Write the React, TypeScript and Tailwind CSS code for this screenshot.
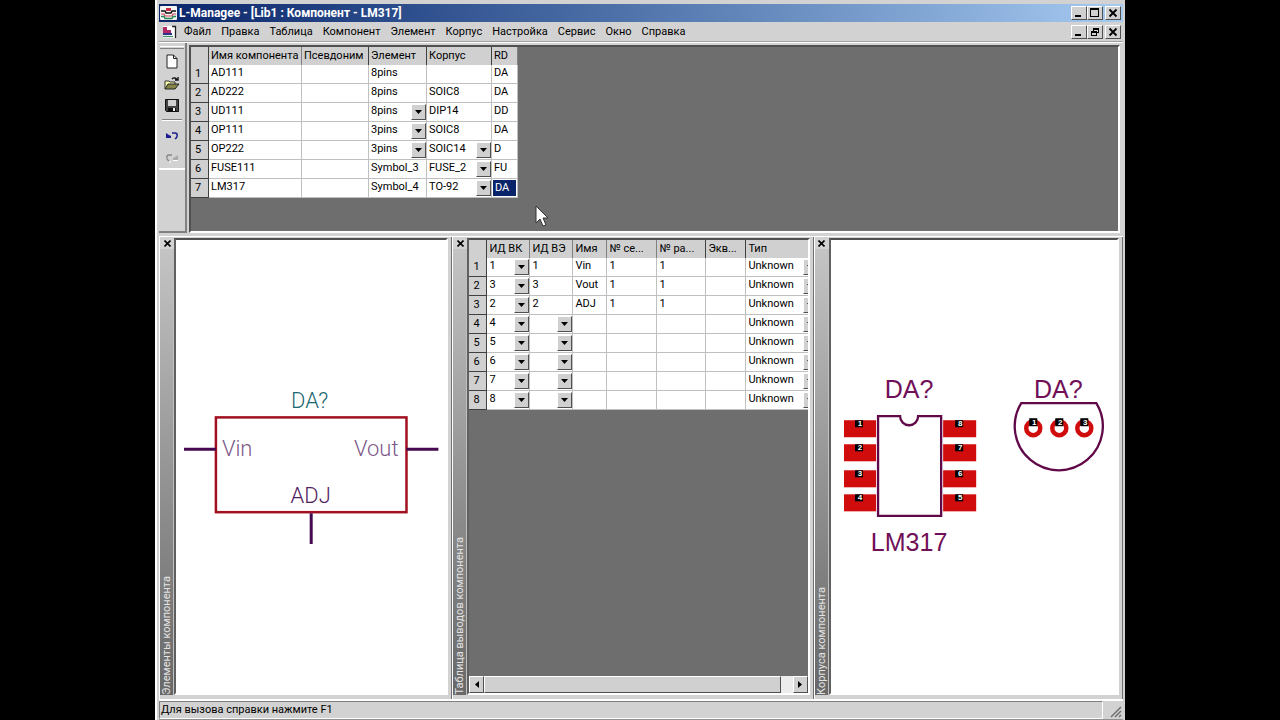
import React from "react";
import clsx from "clsx";

interface Part {
  name: string;
  alias: string;
  symbol: string;
  footprint: string;
  rd: string;
  pickSymbol?: boolean;
  pickFootprint?: boolean;
}

interface Pin {
  pad: string;
  pin: string;
  name: string;
  section: string;
  equal: string;
}

const menuItems = ["Файл", "Правка", "Таблица", "Компонент", "Элемент", "Корпус", "Настройка", "Сервис", "Окно", "Справка"];

const parts: Part[] = [
  { name: "AD111", alias: "", symbol: "8pins", footprint: "", rd: "DA" },
  { name: "AD222", alias: "", symbol: "8pins", footprint: "SOIC8", rd: "DA" },
  { name: "UD111", alias: "", symbol: "8pins", footprint: "DIP14", rd: "DD", pickSymbol: true },
  { name: "OP111", alias: "", symbol: "3pins", footprint: "SOIC8", rd: "DA", pickSymbol: true },
  { name: "OP222", alias: "", symbol: "3pins", footprint: "SOIC14", rd: "D", pickSymbol: true, pickFootprint: true },
  { name: "FUSE111", alias: "", symbol: "Symbol_3", footprint: "FUSE_2", rd: "FU", pickFootprint: true },
  { name: "LM317", alias: "", symbol: "Symbol_4", footprint: "TO-92", rd: "DA", pickFootprint: true },
];

const pins: Pin[] = [
  { pad: "1", pin: "1", name: "Vin", section: "1", equal: "1" },
  { pad: "3", pin: "3", name: "Vout", section: "1", equal: "1" },
  { pad: "2", pin: "2", name: "ADJ", section: "1", equal: "1" },
  { pad: "4", pin: "", name: "", section: "", equal: "" },
  { pad: "5", pin: "", name: "", section: "", equal: "" },
  { pad: "6", pin: "", name: "", section: "", equal: "" },
  { pad: "7", pin: "", name: "", section: "", equal: "" },
  { pad: "8", pin: "", name: "", section: "", equal: "" },
];

const raised = "bg-[#d0d0d0] border border-t-white border-l-white border-r-[#505050] border-b-[#505050]";

/* Drop-down that fills a grid cell */
function CellSelect({ label, value }: { label: string; value: string }) {
  return (
    <div className="relative h-full">
      <select
        aria-label={label}
        defaultValue={value}
        className="block h-full w-full appearance-none bg-transparent pl-[2px] pr-4 pb-[3px] leading-[15px] outline-none"
      >
        <option value={value}>{value}</option>
      </select>
      <span className={clsx("pointer-events-none absolute right-0 top-px flex h-4 w-[15px] items-center justify-center", raised)}>
        <svg width="7" height="4" viewBox="0 0 7 4">
          <path d="M0 0h7L3.500 4z" fill="#000" />
        </svg>
      </span>
    </div>
  );
}

function HeadCell({ children, dark }: { children?: React.ReactNode; dark?: boolean }) {
  return (
    <th
      scope="col"
      className={clsx(
        "h-[18px] truncate border-r bg-[#d0d0d0] p-0 pl-[2px] pb-px text-left font-normal leading-4",
        dark ? "border-[#404040]" : "border-[#808080]"
      )}
    >
      {children}
    </th>
  );
}

function RowHead({ children }: { children: React.ReactNode }) {
  return (
    <th
      scope="row"
      className="h-[19px] border-b border-r border-[#404040] bg-[#d0d0d0] p-0 pl-1 text-left font-normal leading-4"
    >
      {children}
    </th>
  );
}

function Cell({ children, flush }: { children?: React.ReactNode; flush?: boolean }) {
  return (
    <td
      className={clsx(
        "h-[19px] border-b border-r border-[#c0c0c0] bg-white p-0 align-top leading-[15px] whitespace-nowrap",
        !flush && "pl-[2px]"
      )}
    >
      {children}
    </td>
  );
}

function PartsTable() {
  return (
    <table className="w-[327px] table-fixed border-separate border-spacing-0">
      <colgroup>
        <col className="w-[18px]" />
        <col className="w-[93px]" />
        <col className="w-[67px]" />
        <col className="w-[58px]" />
        <col className="w-[65px]" />
        <col className="w-[26px]" />
      </colgroup>
      <thead>
        <tr>
          <HeadCell dark />
          <HeadCell>Имя компонента</HeadCell>
          <HeadCell dark>Псевдоним</HeadCell>
          <HeadCell dark>Элемент</HeadCell>
          <HeadCell dark>Корпус</HeadCell>
          <HeadCell>RD</HeadCell>
        </tr>
      </thead>
      <tbody>
        {parts.map((part, i) => (
          <tr key={part.name}>
            <RowHead>{i + 1}</RowHead>
            <Cell>{part.name}</Cell>
            <Cell>{part.alias}</Cell>
            <Cell flush={part.pickSymbol}>
              {part.pickSymbol ? <CellSelect label={`Элемент ${part.name}`} value={part.symbol} /> : part.symbol}
            </Cell>
            <Cell flush={part.pickFootprint}>
              {part.pickFootprint ? <CellSelect label={`Корпус ${part.name}`} value={part.footprint} /> : part.footprint}
            </Cell>
            <Cell flush={i === parts.length - 1}>
              {i === parts.length - 1 ? (
                <span className="mx-px mt-px block h-4 bg-[#0a246a] pl-[2px] text-white">{part.rd}</span>
              ) : (
                part.rd
              )}
            </Cell>
          </tr>
        ))}
      </tbody>
    </table>
  );
}

function PinsTable() {
  return (
    <table className="w-[350px] table-fixed border-separate border-spacing-0">
      <colgroup>
        <col className="w-[18px]" />
        <col className="w-[43px]" />
        <col className="w-[43px]" />
        <col className="w-[34px]" />
        <col className="w-[50px]" />
        <col className="w-[49px]" />
        <col className="w-[40px]" />
        <col className="w-[73px]" />
      </colgroup>
      <thead>
        <tr>
          <HeadCell dark />
          <HeadCell>ИД ВК</HeadCell>
          <HeadCell>ИД ВЭ</HeadCell>
          <HeadCell>Имя</HeadCell>
          <HeadCell>№ се...</HeadCell>
          <HeadCell dark>№ ра...</HeadCell>
          <HeadCell dark>Экв...</HeadCell>
          <HeadCell>Тип</HeadCell>
        </tr>
      </thead>
      <tbody>
        {pins.map((pin, i) => (
          <tr key={pin.pad}>
            <RowHead>{i + 1}</RowHead>
            <Cell flush>
              <CellSelect label={`ИД ВК ${i + 1}`} value={pin.pad} />
            </Cell>
            <Cell flush={!pin.pin}>{pin.pin || <CellSelect label={`ИД ВЭ ${i + 1}`} value="" />}</Cell>
            <Cell>{pin.name}</Cell>
            <Cell>{pin.section}</Cell>
            <Cell>{pin.equal}</Cell>
            <Cell />
            <Cell flush>
              <CellSelect label={`Тип ${i + 1}`} value="Unknown" />
            </Cell>
          </tr>
        ))}
      </tbody>
    </table>
  );
}

function CaptionButton({ label, children }: { label: string; children: React.ReactNode }) {
  return (
    <button type="button" aria-label={label} className={clsx("flex h-[14px] w-4 items-center justify-center", raised)}>
      <svg width="10" height="10" viewBox="0 0 10 10" fill="none" stroke="#000" shapeRendering="crispEdges">
        {children}
      </svg>
    </button>
  );
}

function CaptionButtons({ nested }: { nested?: boolean }) {
  return (
    <div className="ml-auto flex items-center">
      <CaptionButton label="Свернуть">
        <path d="M1 8h6" strokeWidth="2" />
      </CaptionButton>
      {nested ? (
        <CaptionButton label="Восстановить">
          <path d="M3 2h6M3.500 2v2M8.500 2v4M7 5.500h2M1 5h6M1.500 5v4M6.500 5v4M1 8.500h6" strokeWidth="1.400" />
        </CaptionButton>
      ) : (
        <CaptionButton label="Развернуть">
          <path d="M0 1h9" strokeWidth="2" />
          <path d="M.5 1v8M8.500 1v8M0 8.500h9" />
        </CaptionButton>
      )}
      <div className="ml-[2px] flex">
        <CaptionButton label="Закрыть">
          <path d="M1.500 1.500l7 7M8.500 1.500l-7 7" strokeWidth="1.800" shapeRendering="auto" />
        </CaptionButton>
      </div>
    </div>
  );
}

function AppIcon() {
  return (
    <svg width="17" height="14" viewBox="0 0 17 14">
      <rect width="17" height="14" rx="1" fill="#f4f4f4" />
      <path d="M1 5h4l1 2h5l1-2h4" fill="none" stroke="#111" strokeWidth="1.500" />
      <path d="M6 2h5v3H6z" fill="#c83048" />
      <path d="M1 8h3l1 2h7l1-2h3" fill="none" stroke="#d04058" strokeWidth="1.200" />
      <path d="M1 10.500h3l1 2h7l1-2h3" fill="none" stroke="#208850" strokeWidth="1.400" />
    </svg>
  );
}

function DocIcon() {
  return (
    <svg width="16" height="14" viewBox="0 0 16 14">
      <path d="M1 1h10l3 3v9H1z" fill="#fff" />
      <path d="M10 1.500h3.500v11.500" fill="none" stroke="#222" strokeWidth="1.300" />
      <path d="M1 2h4v3h4v3H1z" fill="#b02868" />
      <path d="M1 8h9v2H1z" fill="#303088" />
      <path d="M1 11.500h10" stroke="#409070" strokeWidth="1.300" />
    </svg>
  );
}

const tools = [
  {
    label: "Создать",
    icon: (
      <>
        <path d="M3 2h6.500L13 5.500V15H3z" fill="#fff" stroke="#222" />
        <path d="M9.500 2v3.500H13" fill="none" stroke="#222" />
      </>
    ),
  },
  {
    label: "Открыть",
    icon: (
      <>
        <path d="M1 14V6h4l1 1h5v3" fill="#ffffb0" stroke="#333" />
        <path d="M1 14l3-5h11l-4 5z" fill="#85854a" stroke="#222" />
        <path d="M8 4c2-2 4-1 5 1m1-3v3h-3" fill="none" stroke="#111" strokeWidth="1.400" />
      </>
    ),
  },
  {
    label: "Сохранить",
    icon: (
      <>
        <path d="M1.500 2.500h13v12h-12l-1-1z" fill="#444" stroke="#111" />
        <path d="M4 3h8v6H4z" fill="#d0d0d0" />
        <path d="M4 11h8v3H4z" fill="#111" />
        <path d="M9 11h2v3H9z" fill="#eee" />
      </>
    ),
  },
];

function ToolButton({ label, disabled, children }: { label: string; disabled?: boolean; children: React.ReactNode }) {
  return (
    <button type="button" aria-label={label} disabled={disabled} className="flex h-[22px] w-[22px] items-center justify-center">
      <svg width="16" height="16" viewBox="0 0 16 16">
        {children}
      </svg>
    </button>
  );
}

function Toolbar() {
  return (
    <div className="flex w-[28px] flex-col items-center border-b-2 border-r-2 border-b-[#808080] border-r-[#808080]">
      <div className="mb-px mt-[3px] h-[3px] w-6 border-b border-t border-b-[#808080] border-t-white" />
      {tools.map((tool) => (
        <ToolButton key={tool.label} label={tool.label}>
          {tool.icon}
        </ToolButton>
      ))}
      <div className="my-[3px] h-[2px] w-5 border-b border-t border-b-white border-t-[#808080]" />
      <ToolButton label="Отменить">
        <path d="M2 6v5h5V9L5 8z" fill="#1c1c90" />
        <path d="M8 6h3c3 0 3 4 0 6" fill="none" stroke="#1c1c90" strokeWidth="1.500" />
      </ToolButton>
      <ToolButton label="Вернуть" disabled>
        <path d="M14 6v5H9V9l2-1z" fill="#aaa" />
        <path d="M8 6H5C2 6 2 10 5 12" fill="none" stroke="#888" strokeWidth="1.300" />
        <path d="M5 13h2M9 11.500h5" fill="none" stroke="#fff" />
      </ToolButton>
      <div className="w-full border-b-2 border-white" />
    </div>
  );
}

/* Docked pane with a grey caption strip down its left side */
function DockPane({ title, children, dark }: { title: string; children: React.ReactNode; dark?: boolean }) {
  return (
    <section className="flex min-w-0 border-l border-l-white border-r border-r-[#707070] pb-1 pr-[3px] pt-px">
      <div className="flex w-[14px] shrink-0 flex-col items-center">
        <button type="button" aria-label={`Закрыть: ${title}`} className="flex h-[11px] w-full items-center justify-center">
          <svg width="7" height="7" viewBox="0 0 7 7" stroke="#000" strokeWidth="1.600">
            <path d="M.5.500l6 6M6.500.500l-6 6" />
          </svg>
        </button>
        <div className="flex w-full flex-1 items-end border-r border-[#c0c0c0] bg-linear-to-b from-[#c4c4c4] to-[#686868]">
          <h2 className="rotate-180 whitespace-nowrap text-[11px] leading-[13px] text-[#e4e4e4] [writing-mode:vertical-rl]">{title}</h2>
        </div>
      </div>
      <div
        className={clsx(
          "min-w-0 flex-1 overflow-hidden border-2 border-b-white border-l-[#606060] border-r-white border-t-[#505050]",
          dark ? "bg-[#6e6e6e]" : "bg-white"
        )}
      >
        {children}
      </div>
    </section>
  );
}

function SymbolDrawing() {
  return (
    <svg className="h-full w-full" viewBox="0 0 271 452" fontFamily="Roboto, 'Liberation Sans', sans-serif" fontWeight="300" fontSize="22">
      <rect x="40" y="177" width="191" height="95" fill="none" stroke="#a01020" strokeWidth="2.500" />
      <path d="M8 209h32M231 209h32M135.500 273v31" stroke="#460850" strokeWidth="3" />
      <text x="134" y="168" textAnchor="middle" fill="#1c6870">DA?</text>
      <text x="46" y="216" fill="#7c5888">Vin</text>
      <text x="223" y="216" textAnchor="end" fill="#7c5888">Vout</text>
      <text x="135" y="263" textAnchor="middle" fill="#502060">ADJ</text>
    </svg>
  );
}

const leftPads = ["1", "2", "3", "4"];
const rightPads = ["8", "7", "6", "5"];
const padRows = [180, 204, 230, 254];

function FootprintDrawing() {
  return (
    <svg className="h-full w-full" viewBox="0 0 286 452" fontFamily="'Liberation Sans', Arial, sans-serif">
      {padRows.map((y, i) => (
        <g key={y} fontSize="8" fontWeight="bold" fill="#fff" textAnchor="middle">
          <rect x="13" y={y} width="32" height="17" fill="#d00c0c" />
          <rect x="112" y={y} width="33" height="17" fill="#d00c0c" />
          <rect x="24" y={y} width="8" height="7" fill="#000" />
          <rect x="124" y={y} width="8" height="7" fill="#000" />
          <text x="29" y={y + 6}>{leftPads[i]}</text>
          <text x="129" y={y + 6}>{rightPads[i]}</text>
        </g>
      ))}
      <path d="M47 176h22a9 9 0 0 0 18 0h23v99.500H47z" fill="#fff" stroke="#600848" strokeWidth="2.300" />
      <text x="78" y="158" fontSize="25" textAnchor="middle" fill="#701058">DA?</text>
      <text x="78" y="311" fontSize="25" textAnchor="middle" fill="#701058">LM317</text>
      <text x="227" y="158" fontSize="25" textAnchor="middle" fill="#701058">DA?</text>
      <path d="M190 163h75A44 44 0 1 1 190 163z" fill="none" stroke="#600848" strokeWidth="2.300" />
      {[202, 228, 253].map((x, i) => (
        <g key={x}>
          <circle cx={x} cy="188" r="7" fill="#fff" stroke="#d00c0c" strokeWidth="4.500" />
          <rect x={x - 4} y="178" width="8" height="8" fill="#000" />
          <text x={x + 1} y="185" fontSize="8" fontWeight="bold" textAnchor="middle" fill="#fff">{i + 1}</text>
        </g>
      ))}
    </svg>
  );
}

function HScroll() {
  const arrow = clsx("flex w-[15px] items-center justify-center", raised);
  return (
    <div className="mt-auto flex h-[17px] bg-[#ececec]">
      <button type="button" aria-label="Влево" className={arrow}>
        <svg width="4" height="7" viewBox="0 0 4 7"><path d="M4 0v7L0 3.500z" /></svg>
      </button>
      <div className={clsx("mr-3 flex-1", raised)} />
      <button type="button" aria-label="Вправо" className={arrow}>
        <svg width="4" height="7" viewBox="0 0 4 7"><path d="M0 0v7l4-3.500z" /></svg>
      </button>
    </div>
  );
}

export default function App() {
  return (
    <div className="min-h-screen bg-black px-[155px] font-[Roboto,'Liberation_Sans',sans-serif] text-[11px] text-black">
      <main className="flex min-h-screen flex-col border-l-2 border-white bg-[#d2d2d2] px-[2px] pt-1">
        <header className="flex h-[18px] items-center gap-[2px] bg-linear-to-r from-[#0a246a] to-[#a6caf0] pl-px pr-[2px] text-white">
          <AppIcon />
          <h1 className="text-xs font-bold leading-4">L-Managee - [Lib1 : Компонент - LM317]</h1>
          <CaptionButtons />
        </header>

        <nav aria-label="Меню" className="flex h-[20px] items-center border-b border-[#a0a0a0] pl-[3px] pr-[2px]">
          <DocIcon />
          <div className="ml-[6px] flex gap-[10px]">
            {menuItems.map((item) => (
              <button key={item} type="button" className="leading-4">
                {item}
              </button>
            ))}
          </div>
          <CaptionButtons nested />
        </nav>

        <div className="relative flex h-[191px] border-t border-white">
          <Toolbar />
          <div className="ml-[2px] mr-[3px] mt-[2px] flex-1 overflow-hidden border-2 border-b-white border-l-[#505050] border-r-white border-t-[#505050] bg-[#6e6e6e]">
            <PartsTable />
          </div>
          {/* Pointer resting over the empty grid area */}
          <svg className="absolute left-[376px] top-[162px]" width="13" height="22" viewBox="0 0 13 22">
            <path d="M1 1v17l4-4 3 7 3-1-3-7h5z" fill="#fff" stroke="#333" />
          </svg>
        </div>

        <div className="mt-[3px] grid min-h-0 flex-1 grid-cols-[294fr_362fr_310fr] border-t border-white">
          <DockPane title="Элементы компонента">
            <SymbolDrawing />
          </DockPane>
          <DockPane title="Таблица выводов компонента" dark>
            <div className="flex h-full flex-col">
              <PinsTable />
              <HScroll />
            </div>
          </DockPane>
          <DockPane title="Корпуса компонента">
            <FootprintDrawing />
          </DockPane>
        </div>

        <footer className="flex h-[22px] items-center border-b-2 border-t-2 border-b-[#909090] border-t-white">
          <p className="flex-1 border border-b-white border-l-[#808080] border-r-white border-t-[#808080] pl-px leading-4">
            Для вызова справки нажмите F1
          </p>
          <svg className="ml-1" width="16" height="16" viewBox="0 0 16 16" stroke="#707070" strokeWidth="1.500">
            <path d="M4 15L14 5M8 15l6-6M12 15l2-2" />
          </svg>
        </footer>
      </main>
    </div>
  );
}
